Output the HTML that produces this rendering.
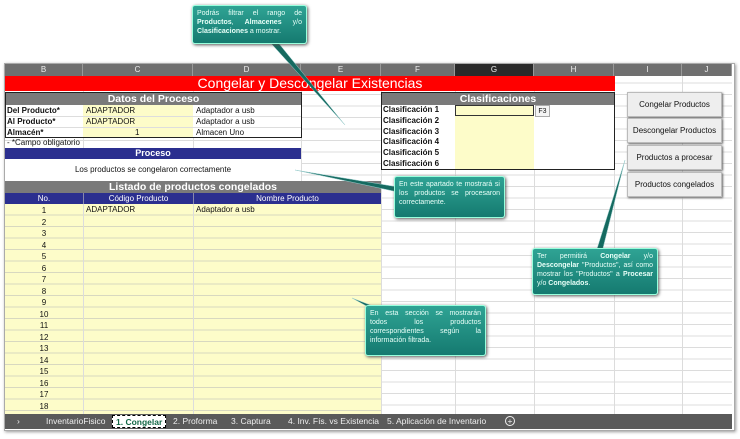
<!DOCTYPE html><html><head><meta charset="utf-8"><style>
*{margin:0;padding:0;box-sizing:border-box}
body{width:740px;height:439px;background:#fff;position:relative;overflow:hidden;font-family:"Liberation Sans",Arial,sans-serif;font-size:8px;color:#111}
.a{position:absolute}
.grid{left:5px;top:76px;width:727px;height:338px;background:
repeating-linear-gradient(to bottom,transparent 0,transparent 10.5px,#dcdcdc 10.5px,#dcdcdc 11.5px);background-position:0 -4px}
.vl{position:absolute;top:76px;height:338px;width:1px;background:#dcdcdc}
.hd{top:64px;height:12px;background:#6f6f6f;color:#eee;font-size:8px;text-align:center;line-height:12px;border-right:1px solid #999}
.gh{background:#7a7a7a;color:#fff;font-weight:bold;font-size:10.5px;text-align:center}
.bl{background:#2b2f8f;color:#fff;text-align:center}
.lbl{font-weight:bold;font-size:8px}
.btn{left:627px;width:95px;height:25px;background:#eee;border:1px solid #bbb;box-shadow:1px 1px 2px #666;text-align:center;line-height:24px;font-size:8px}
.call{background:linear-gradient(#2fa394,#157a70);color:#e8fff8;font-size:7px;line-height:9px;padding:3px 4px;border:1px solid #9fd;border-radius:3px;text-align:justify;box-shadow:1px 1px 3px #555}
.num{left:5px;width:78px;text-align:center;height:11.5px;line-height:11.5px}
</style></head><body>
<div class="a" style="left:4px;top:63px;width:731px;height:368px;border:1px solid #aaa;box-shadow:1px 1px 3px #999"></div>
<div class="a grid"></div>
<div class="vl" style="left:301px;height:105px"></div><div class="vl" style="left:381px"></div><div class="vl" style="left:455px"></div><div class="vl" style="left:534px"></div><div class="vl" style="left:614px"></div><div class="vl" style="left:682px"></div>
<div class="a" style="left:5px;top:193px;width:376px;height:221px;background:#fdfcc9"></div>
<div class="a" style="left:5px;top:204px;width:376px;height:210px;background:repeating-linear-gradient(to bottom,transparent 0,transparent 10.5px,#d8d8c0 10.5px,#d8d8c0 11.5px)"></div>
<div class="vl" style="left:83px"></div><div class="vl" style="left:193px"></div>
<div class="a hd" style="left:5px;width:78px">B</div>
<div class="a hd" style="left:83px;width:110px">C</div>
<div class="a hd" style="left:193px;width:108px">D</div>
<div class="a hd" style="left:301px;width:80px">E</div>
<div class="a hd" style="left:381px;width:74px">F</div>
<div class="a hd" style="left:455px;width:79px;background:#2a2a2a">G</div>
<div class="a hd" style="left:534px;width:80px">H</div>
<div class="a hd" style="left:614px;width:68px">I</div>
<div class="a hd" style="left:682px;width:50px">J</div>
<div class="a" style="left:5px;top:76px;width:610px;height:15px;background:#f00;color:#fff;font-size:14px;text-align:center;line-height:15px">Congelar y Descongelar Existencias</div>
<div class="a" style="left:5px;top:92px;width:297px;height:46px;border:1px solid #222;background:#fff"></div>
<div class="a gh" style="left:6px;top:93px;width:295px;height:12px;line-height:12px">Datos del Proceso</div>
<div class="a" style="left:83px;top:105px;width:110px;height:32px;background:#fdfcc9"></div>
<div class="a" style="left:6px;top:116px;width:295px;height:1px;background:#ddd"></div>
<div class="a" style="left:6px;top:127px;width:295px;height:1px;background:#ddd"></div>
<div class="a lbl" style="left:7px;top:105px;line-height:11px">Del Producto*<br>Al Producto*<br>Almacén*</div>
<div class="a" style="left:86px;top:105px;line-height:11px">ADAPTADOR<br>ADAPTADOR</div>
<div class="a" style="left:135px;top:127px;line-height:11px">1</div>
<div class="a" style="left:196px;top:105px;line-height:11px">Adaptador a usb<br>Adaptador a usb<br>Almacen Uno</div>
<div class="a" style="left:7px;top:138px;line-height:10px">- *Campo obligatorio</div>
<div class="a bl" style="left:5px;top:148px;width:296px;height:11px;line-height:11px;font-weight:bold;font-size:9px">Proceso</div>
<div class="a" style="left:5px;top:159px;width:296px;height:22px;background:#fff;text-align:center;line-height:22px">Los productos se congelaron correctamente</div>
<div class="a gh" style="left:5px;top:181px;width:376px;height:12px;line-height:12px">Listado de productos congelados</div>
<div class="a bl" style="left:5px;top:193px;width:78px;height:11px;line-height:11px">No.</div>
<div class="a bl" style="left:83px;top:193px;width:110px;height:11px;line-height:11px;border-left:1px solid #88a">Código Producto</div>
<div class="a bl" style="left:193px;top:193px;width:188px;height:11px;line-height:11px;border-left:1px solid #88a">Nombre Producto</div>
<div class="a" style="left:86px;top:205px">ADAPTADOR</div>
<div class="a" style="left:196px;top:205px">Adaptador a usb</div>
<div class="a num" style="top:205px;line-height:11.5px">1<br>2<br>3<br>4<br>5<br>6<br>7<br>8<br>9<br>10<br>11<br>12<br>13<br>14<br>15<br>16<br>17<br>18</div>
<div class="a" style="left:381px;top:92px;width:234px;height:78px;border:1px solid #222;background:#fff"></div>
<div class="a gh" style="left:382px;top:93px;width:232px;height:12px;line-height:12px">Clasificaciones</div>
<div class="a" style="left:455px;top:105px;width:79px;height:64px;background:#fdfcc9"></div>
<div class="a" style="left:455px;top:105px;width:79px;height:11px;border:1px solid #333"></div>
<div class="a" style="left:535px;top:105px;width:15px;height:12px;border:1px solid #aaa;background:#f4f4f4;font-size:7px;text-align:center;line-height:11px">F3</div>
<div class="a lbl" style="left:383px;top:105px;line-height:10.8px">Clasificación 1<br>Clasificación 2<br>Clasificación 3<br>Clasificación 4<br>Clasificación 5<br>Clasificación 6</div>
<div class="a btn" style="top:92px">Congelar Productos</div>
<div class="a btn" style="top:118px">Descongelar Productos</div>
<div class="a btn" style="top:145px">Productos a procesar</div>
<div class="a btn" style="top:172px">Productos congelados</div>
<div class="a" style="left:5px;top:414px;width:727px;height:15px;background:#5a5a5a;color:#eee;font-size:8.5px;line-height:15px;white-space:nowrap">
<span style="position:absolute;left:12px">›</span>
<span style="position:absolute;left:41px">InventarioFisico</span>
<span style="position:absolute;left:107px;top:1px;height:13px;line-height:12px;background:#fff;color:#164;font-weight:bold;border:1px dashed #000;padding:0 3px">1. Congelar</span>
<span style="position:absolute;left:168px">2. Proforma</span>
<span style="position:absolute;left:226px">3. Captura</span>
<span style="position:absolute;left:283px">4. Inv. Fís. vs Existencia</span>
<span style="position:absolute;left:382px">5. Aplicación de Inventario</span>
<span style="position:absolute;left:500px;top:2px;width:10px;height:10px;border:1px solid #eee;border-radius:50%;line-height:8px;text-align:center">+</span>
</div>
<svg class="a" style="left:0;top:0" width="740" height="439">
<polygon points="268,40 276,40 345,125" fill="#156a60" stroke="#9cc" stroke-width="0.5"/>
<polygon points="398,187 398,192 295,170" fill="#156a60" stroke="#9cc" stroke-width="0.5"/>
<polygon points="596,252 602,252 625,160" fill="#156a60" stroke="#9cc" stroke-width="0.5"/>
<polygon points="370,308 378,308 352,298" fill="#156a60" stroke="#9cc" stroke-width="0.5"/>
</svg>
<div class="a call" style="left:192px;top:5px;width:115px;height:39px">Podrás filtrar el rango de <b>Productos</b>, <b>Almacenes</b> y/o <b>Clasificaciones</b> a mostrar.</div>
<div class="a call" style="left:394px;top:176px;width:111px;height:42px">En este apartado te mostrará si los productos se procesaron correctamente.</div>
<div class="a call" style="left:532px;top:248px;width:126px;height:47px">Ter permitirá <b>Congelar</b> y/o <b>Descongelar</b> "Productos", así como mostrar los "Productos" a <b>Procesar</b> y/o <b>Congelados</b>.</div>
<div class="a call" style="left:365px;top:305px;width:121px;height:51px">En esta sección se mostrarán todos los productos correspondientes según la información filtrada.</div>
</body></html>
